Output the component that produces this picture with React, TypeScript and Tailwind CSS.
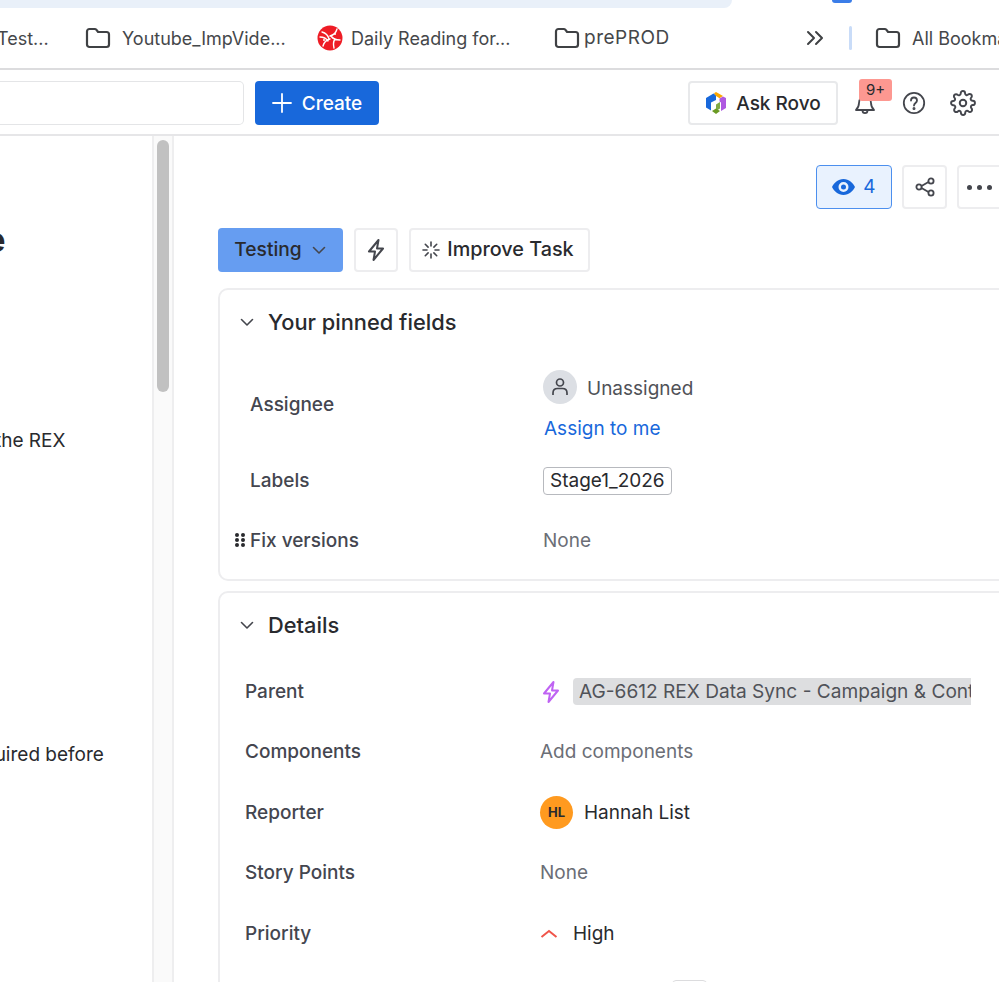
import React from "react";

const Folder = () => (
  <svg width="26" height="22" viewBox="0 0 26 22" fill="none" stroke="#3f4144" strokeWidth="2.2" strokeLinejoin="round" className="shrink-0">
    <path d="M2 4.500C2 3 3 2 4.500 2h5.200c.8 0 1.300.3 1.800.9l1.600 2.100h8.400C23 5 24 6 24 7.500v10c0 1.500-1 2.500-2.500 2.500h-17C3 20 2 19 2 17.500z" />
  </svg>
);

const Chevron = ({ size = 18, color = "#44464d" }: { size?: number; color?: string }) => (
  <svg width={size} height={size} viewBox="0 0 18 18" fill="none" stroke={color} strokeWidth="1.6" strokeLinecap="round" strokeLinejoin="round" className="shrink-0">
    <path d="M3.500 6.500 9 12l5.500-5.500" />
  </svg>
);

const Bolt = ({ color, size = 24 }: { color: string; size?: number }) => (
  <svg width={size} height={size} viewBox="0 0 24 24" fill="none" stroke={color} strokeWidth="2" strokeLinejoin="round" className="shrink-0">
    <path d="M14.500 2 5 13.500h6L9.500 22 19 10.500h-6z" />
  </svg>
);

const Daily = () => (
  <svg width="26" height="26" viewBox="0 0 26 26" className="shrink-0">
    <circle cx="13" cy="13" r="12.500" fill="#ee1c25" />
    <g stroke="#fff" strokeWidth="1.400" fill="none" strokeLinecap="round">
      <path d="M5 7c4 1 6 3 7 7M20 4c-1 4-3 6-7 7M23 15c-4 0-7-1-9-4M17 23c-1-4-1-6 1-9M6 21c1-4 3-6 7-7M3 12c3 0 6 1 8 4" />
    </g>
    <circle cx="7" cy="15" r="1" fill="#fff" />
    <circle cx="18" cy="9" r="1" fill="#fff" />
  </svg>
);

const Rovo = () => (
  <svg width="22" height="24" viewBox="0 0 22 24" className="shrink-0">
    <path d="M1 7 8.500 2.500 11 4.200V9L6 11.500V19.500L1 16.500z" fill="#1868db" />
    <path d="M9 2.200 11 1l7 4-3.500 2.200L11 5z" fill="#fca700" />
    <path d="M21 7v10l-5 3V11.500l-1.500-1V7.500L18 5.500z" fill="#af59e1" />
    <path d="M7 20l4-2.500 4 2.500-4 3z" fill="#6a9a23" />
    <path d="M11 17.500V13.500L15 11v6.500l-4 2.500z" fill="#6a9a23" opacity="0.85" />
  </svg>
);

const Field = ({ label, children }: { label: string; children: React.ReactNode }) => (
  <div className="grid h-[60.500px] grid-cols-[295px_1fr] items-center">
    <div className="text-[19px] font-medium text-[#44464f]">{label}</div>
    <div className="flex min-w-0 items-center">{children}</div>
  </div>
);

export default function App() {
  return (
    <div className="flex h-[982px] w-[999px] flex-col overflow-hidden bg-white font-['Inter',sans-serif] text-[#292a2e]">
      {/* browser chrome */}
      <div className="relative h-[70px] shrink-0 border-b-2 border-[#dcdcde]">
        <div className="h-2 w-[732px] rounded-br-[18px] bg-[#e9f0f9]" />
        <div className="absolute left-[832px] top-0 h-[3px] w-5 rounded-b-[6px] bg-[#3b7de8]" />
        <div className="flex h-[60px] items-center overflow-hidden whitespace-nowrap text-[18px] text-[#45474a]">
          <span className="-ml-[3px] w-[88px] shrink-0">Test...</span>
          <Folder />
          <span className="ml-[11px] w-[195px] shrink-0">Youtube_ImpVide...</span>
          <Daily />
          <span className="ml-[8px] w-[203px] shrink-0">Daily Reading for...</span>
          <Folder />
          <span className="ml-[4px] w-[222px] shrink-0 text-[19px] tracking-[0.500px]">prePROD</span>
          <svg width="18" height="16" viewBox="0 0 18 16" fill="none" stroke="#3f4144" strokeWidth="2" strokeLinecap="round" strokeLinejoin="round" className="shrink-0">
            <path d="m2 2 6 6-6 6M10 2l6 6-6 6" />
          </svg>
          <div className="ml-[25px] h-6 w-[3px] shrink-0 rounded bg-[#c9dcf8]" />
          <div className="ml-[23px]"><Folder /></div>
          <span className="ml-[11px]">All Bookmarks</span>
        </div>
      </div>

      {/* app header */}
      <div className="flex h-[66px] shrink-0 items-center border-b-2 border-[#e6e6e8] pt-[1px]">
        <div className="h-[44px] w-[244px] shrink-0 rounded-r-[5px] border border-l-0 border-[#e4e5e7]" />
        <button className="ml-[11px] flex h-[44px] w-[124px] items-center justify-center gap-[10px] rounded-[4px] bg-[#1868db] text-[19px] font-medium text-white">
          <svg width="20" height="20" viewBox="0 0 20 20" stroke="#fff" strokeWidth="1.800" strokeLinecap="round"><path d="M10 1v18M1 10h18" /></svg>
          <span className="pt-[3px]">Create</span>
        </button>
        <button className="ml-[309px] flex h-[44px] w-[150px] items-center justify-center gap-[9px] rounded-[4px] border-2 border-[#e8e9eb] text-[19px] font-medium text-[#292a2e]">
          <Rovo />
          <span className="pt-[3px]">Ask Rovo</span>
        </button>
        <div className="relative ml-[15px] flex h-6 w-6 items-center justify-center">
          <svg width="24" height="24" viewBox="0 0 24 24" fill="none" stroke="#44464d" strokeWidth="1.800" strokeLinejoin="round">
            <path d="M3 19c2-2 3-3 3-7 0-4 2.500-7 6-7s6 3 6 7c0 4 1 5 3 7z" />
            <path d="M9.500 19.500c0 3.500 5 3.500 5 0" />
          </svg>
          <span className="absolute left-[6px] top-[-12px] flex h-[22px] w-[33px] items-center justify-center rounded-[3px] bg-[#fd9891] text-[15px] leading-none text-[#292a2e]">9+</span>
        </div>
        <svg width="24" height="24" viewBox="0 0 24 24" fill="none" stroke="#44464d" strokeWidth="1.800" strokeLinecap="round" className="ml-[25px] shrink-0">
          <circle cx="12" cy="12" r="10.200" />
          <path d="M9 9.500c0-4 6-4 6 0 0 2.500-3 2.500-3 5" />
          <circle cx="12" cy="17.500" r="0.600" fill="#44464d" />
        </svg>
        <svg width="26" height="26" viewBox="0 0 24 24" fill="none" stroke="#44464d" strokeWidth="1.800" strokeLinecap="round" strokeLinejoin="round" className="ml-[24px] shrink-0">
          <circle cx="12" cy="12" r="3" />
          <path d="M19.400 15a1.650 1.650 0 0 0 .33 1.820l.06.06a2 2 0 1 1-2.830 2.830l-.06-.06a1.650 1.650 0 0 0-2.800 1.170V21a2 2 0 0 1-4 0v-.09a1.650 1.650 0 0 0-2.800-1.170l-.06.06a2 2 0 1 1-2.830-2.830l.06-.06a1.650 1.650 0 0 0-1.170-2.800H3a2 2 0 0 1 0-4h.09a1.650 1.650 0 0 0 1.170-2.800l-.06-.06a2 2 0 1 1 2.830-2.830l.06.06a1.650 1.650 0 0 0 2.800-1.170V3a2 2 0 0 1 4 0v.09a1.650 1.650 0 0 0 2.800 1.170l.06-.06a2 2 0 1 1 2.830 2.830l-.06.06a1.650 1.650 0 0 0 1.170 2.800H21a2 2 0 0 1 0 4h-.09a1.650 1.650 0 0 0-1.510 1z" />
        </svg>
      </div>

      {/* body */}
      <div className="flex min-h-0 flex-1">
        <div className="w-[152px] shrink-0 overflow-hidden whitespace-nowrap text-[19px]">
          <div className="-ml-[24px] mt-[82px] h-[44px] text-[34px] font-bold leading-[44px]">le</div>
          <div className="-ml-[5px] mt-[165px] h-[28px] leading-[28px]">the REX</div>
          <div className="-ml-[17px] mt-[286px] h-[28px] leading-[28px]">quired before</div>
        </div>
        <div className="w-[22px] shrink-0 border-x-2 border-[#eeeeef] bg-[#fafafa] px-[3px] pt-[4px]">
          <div className="h-[252px] w-3 rounded-[6px] bg-[#c1c1c1]" />
        </div>

        <div className="min-w-0 flex-1 overflow-hidden pl-[44px] pt-[29px]">
          {/* actions */}
          <div className="flex h-[44px] items-center">
            <button className="ml-[598px] flex h-[44px] w-[76px] shrink-0 items-center justify-center gap-[8px] rounded-[4px] border border-[#4c8fee] bg-[#e9f2fe] text-[19px] text-[#1868db]">
              <svg width="23" height="16" viewBox="0 0 23 16">
                <path fillRule="evenodd" fill="#1868db" d="M11.500 0C17 0 21 4 23 8c-2 4-6 8-11.500 8S2 12 0 8c2-4 6-8 11.500-8zm0 3a5 5 0 1 0 0 10 5 5 0 0 0 0-10zm0 2.500a2.500 2.500 0 1 1 0 5 2.500 2.500 0 0 1 0-5z" />
              </svg>
              4
            </button>
            <button className="ml-[10px] flex h-[44px] w-[45px] shrink-0 items-center justify-center rounded-[4px] border-2 border-[#ededef]">
              <svg width="20" height="20" viewBox="0 0 20 20" fill="none" stroke="#44464d" strokeWidth="1.800">
                <circle cx="16" cy="4" r="2.600" />
                <circle cx="16" cy="16" r="2.600" />
                <circle cx="4" cy="10" r="2.600" />
                <path d="m6.500 9 7-4M6.500 11l7 4" />
              </svg>
            </button>
            <button className="ml-[10px] flex h-[44px] w-[60px] shrink-0 items-center justify-start gap-[5px] rounded-[4px] border-2 border-[#ededef] pl-[8px]">
              <span className="h-[5px] w-[5px] rounded-full bg-[#44464d]" />
              <span className="h-[5px] w-[5px] rounded-full bg-[#44464d]" />
              <span className="h-[5px] w-[5px] rounded-full bg-[#44464d]" />
            </button>
          </div>

          {/* status row */}
          <div className="mt-[19px] flex h-[44px] items-center">
            <button className="flex h-[44px] w-[125px] items-center justify-center gap-[8px] rounded-[4px] bg-[#669df1] pl-[1px] text-[19.200px] font-medium text-[#292a2e]">
              <span className="pb-[1px]">Testing</span>
              <Chevron />
            </button>
            <button className="ml-[11px] flex h-[44px] w-[44px] items-center justify-center rounded-[4px] border-2 border-[#ededef]">
              <Bolt color="#44464d" />
            </button>
            <button className="ml-[11px] flex h-[44px] w-[181px] items-center justify-center gap-[7px] rounded-[4px] border-2 border-[#ededef] pr-[3px] text-[19.800px] font-medium text-[#292a2e]">
              <svg width="18" height="18" viewBox="0 0 18 18" stroke="#44464d" strokeWidth="1.600" strokeLinecap="round" className="shrink-0">
                <path d="M9 1v4M9 13v4M1 9h4M13 9h4M3.300 3.300l2.800 2.800M11.900 11.900l2.800 2.800M3.300 14.700l2.800-2.800M11.900 6.100l2.800-2.800" />
              </svg>
              Improve Task
            </button>
          </div>

          {/* pinned card */}
          <section className="-mr-4 mt-[16px] h-[293px] rounded-[10px] border-2 border-[#ededef] pl-[18px]">
            <div className="flex h-[62px] items-center gap-[12px] pt-[2px] text-[21.800px] font-medium text-[#292a2e]">
              <Chevron />
              Your pinned fields
            </div>
            <div className="relative ml-[12px] mt-[8px] grid h-[90px] grid-cols-[293px_1fr] items-center">
              <div className="text-[19px] font-medium text-[#44464f]">Assignee</div>
              <div>
                <div className="flex items-center gap-[10px]">
                  <span className="flex h-[34px] w-[34px] items-center justify-center rounded-full bg-[#dcdfe4]">
                    <svg width="20" height="20" viewBox="0 0 20 20" fill="none" stroke="#44464d" strokeWidth="1.700">
                      <circle cx="10" cy="5.500" r="3.500" />
                      <path d="M3 18v-2c0-3 2-4.500 4.500-4.500h5C15 11.500 17 13 17 16v2" />
                    </svg>
                  </span>
                  <span className="pt-[3px] text-[19px] leading-[23px] text-[#505258]">Unassigned</span>
                </div>
                <div className="ml-[1px] mt-[14px] text-[19px] leading-[22px] text-[#1868db]">Assign to me</div>
              </div>
            </div>
            <div className="ml-[12px] mt-[9px] grid h-[44px] grid-cols-[293px_1fr] items-center">
              <div className="text-[19px] font-medium text-[#44464f]">Labels</div>
              <div>
                <span className="inline-block h-[28px] rounded-[4px] border border-[#b7b9be] px-[6px] text-[19px] leading-[26px] text-[#292a2e]">Stage1_2026</span>
              </div>
            </div>
            <div className="relative ml-[12px] mt-[16px] grid h-[44px] grid-cols-[293px_1fr] items-center">
              <div className="absolute -left-[15px] top-[14px] grid grid-cols-2 gap-x-[2px] gap-y-[1px]">
                {[0, 1, 2, 3, 4, 5].map((i) => (
                  <span key={i} className="h-1 w-1 rounded-full bg-[#292a2e]" />
                ))}
              </div>
              <div className="text-[19px] font-medium text-[#44464f]">Fix versions</div>
              <div className="pt-[1px] text-[19px] text-[#6b6e76]">None</div>
            </div>
          </section>

          {/* details card */}
          <section className="-mr-4 mt-[10px] h-[500px] rounded-[10px] border-2 border-[#ededef] pl-[18px]">
            <div className="flex h-[62px] items-center gap-[12px] pt-[2px] text-[21.800px] font-medium text-[#292a2e]">
              <Chevron />
              Details
            </div>
            <div className="ml-[7px] mt-[6.500px]">
              <Field label="Parent">
                <div className="-ml-[1px]"><Bolt color="#bf63f3" size={24} /></div>
                <span className="ml-[10px] w-[398px] overflow-hidden whitespace-nowrap rounded-l-[4px] bg-[#dddee0] pl-[6px] text-[19.100px] leading-[27px] text-[#505258]">AG-6612 REX Data Sync - Campaign &amp; Content</span>
              </Field>
              <Field label="Components">
                <span className="text-[19px] text-[#6b6e76]">Add components</span>
              </Field>
              <Field label="Reporter">
                <span className="flex h-[33px] w-[33px] items-center justify-center rounded-full bg-[#ff9a1f] text-[13px] font-bold text-[#292a2e]">HL</span>
                <span className="ml-[11px] text-[19px] text-[#292a2e]">Hannah List</span>
              </Field>
              <Field label="Story Points">
                <span className="text-[19px] text-[#6b6e76]">None</span>
              </Field>
              <Field label="Priority">
                <svg width="18" height="10" viewBox="0 0 18 10" fill="none" stroke="#f0554a" strokeWidth="2" className="shrink-0">
                  <path d="M1.500 8 9 2l7.500 6" />
                </svg>
                <span className="ml-[15px] text-[19px] text-[#292a2e]">High</span>
              </Field>
              <div className="ml-[427px] mt-[16px] h-6 w-[35px] rounded-[4px] border border-[#dcdcde]" />
            </div>
          </section>
        </div>
      </div>
    </div>
  );
}
